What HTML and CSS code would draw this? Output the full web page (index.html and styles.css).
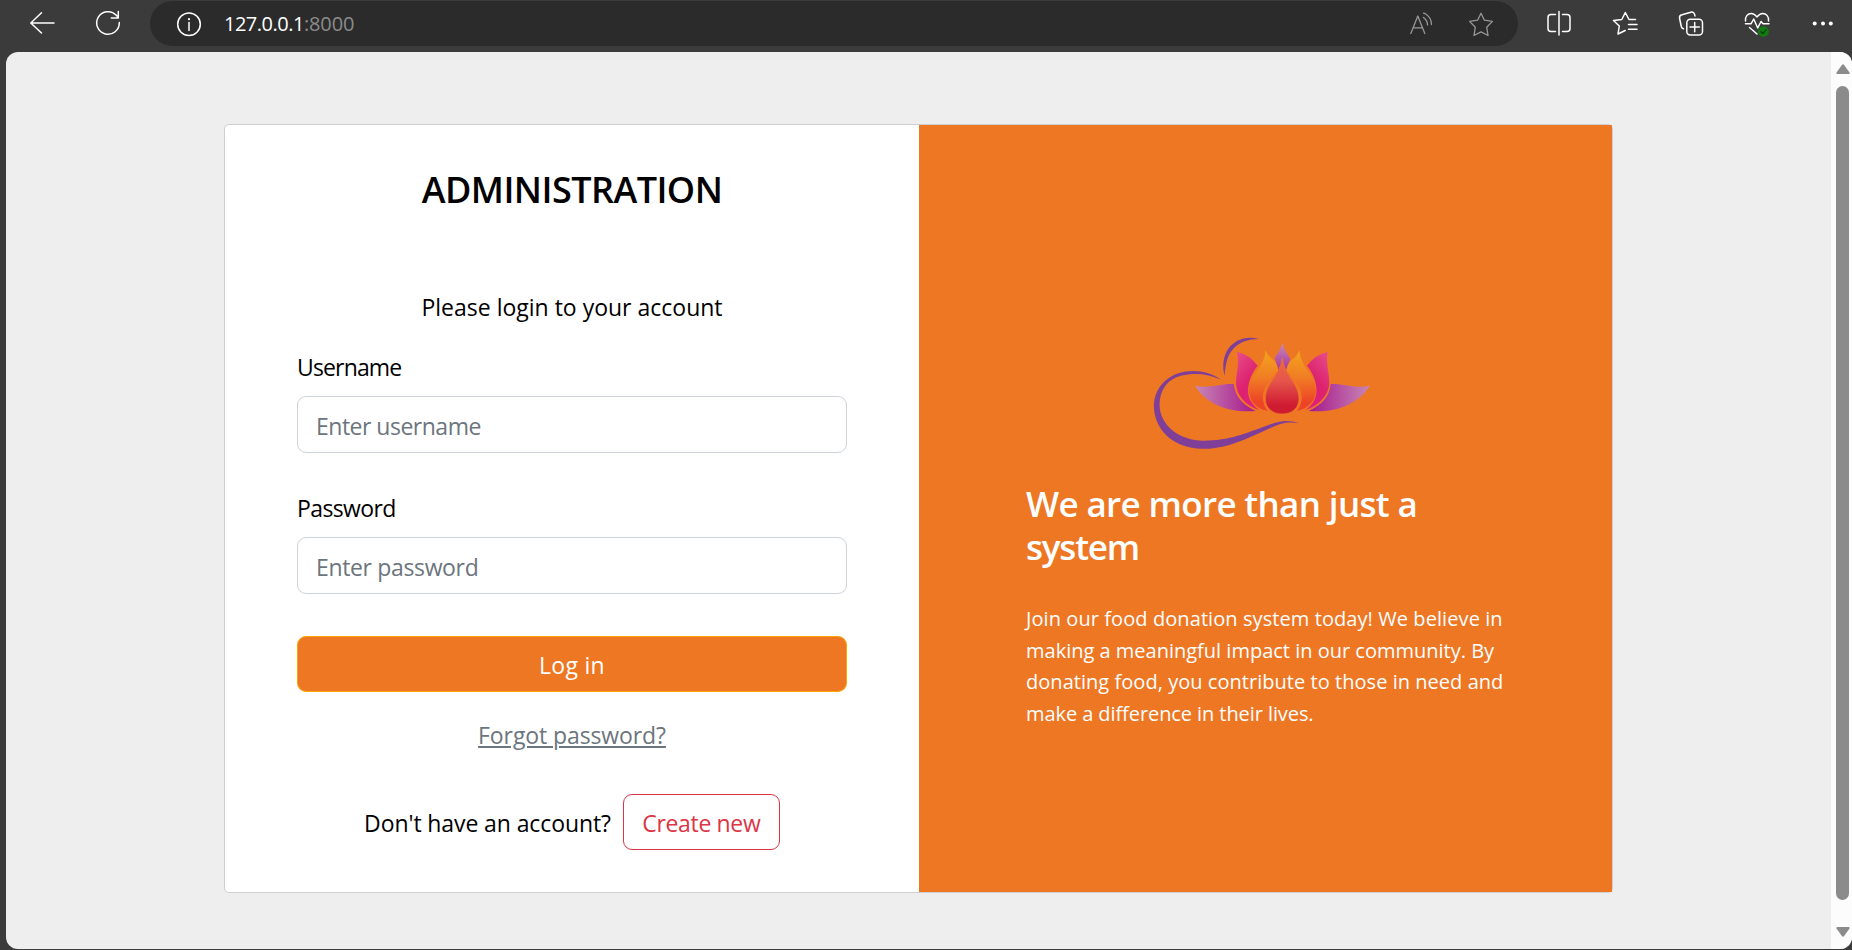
FILE: index.html
```html
<!DOCTYPE html>
<html lang="en">
<head>
<meta charset="utf-8">
<title>Administration</title>
<link rel="stylesheet" href="styles.css">
</head>
<body>
<header class="toolbar">
  <div class="slot"><svg class="icon" viewBox="0 0 28 28"><path d="M26 14H3M13.500 3.800 2.800 14l10.700 10"/></svg></div>
  <div class="slot"><svg class="icon" viewBox="0 0 28 28"><path d="M25.300 13.500A11.300 11.300 0 1 1 22.300 6.300L24.300 8.500M24.300 2.500v6.500h-7"/></svg></div>
  <div class="address">
    <svg class="icon" viewBox="0 0 28 28"><circle cx="14" cy="14.300" r="11.300"/><path d="M14 12.500v8"/><circle class="solid" cx="14" cy="9.200" r="1.100"/></svg>
    <div class="url"><span class="host">127.0.0.1</span><span class="port">:8000</span></div>
    <svg class="icon dim read" viewBox="0 0 28 28"><path d="M2.800 23.500 9.800 6l7 17.500M5.200 17.800h9.200M15.500 7.500q4 3 4 7.500M17 3.500q6.500 4 6.500 11M15.500 3.200q1 .3 2 .7"/></svg>
    <svg class="icon dim star" viewBox="0 0 28 28"><path d="m14 3.300 3.400 6.900 8 1.200-5.700 5.800 1.300 8.300-7-3.600-7 3.600 1.300-8.300-5.700-5.800 8-1.200z"/></svg>
  </div>
  <div class="tools">
    <div class="slot"><svg class="icon" viewBox="0 0 28 28"><path d="M10.500 5.500H6Q3 5.500 3 8.500v11Q3 22.500 6 22.500h4.500M17.500 5.500H22q3 0 3 3v11q0 3-3 3h-4.500M14 2.500v23.500"/></svg></div>
    <div class="slot"><svg class="icon" viewBox="0 0 28 28"><path d="M24.500 10.500H18l-3.700-7-3.500 7-8.300 1 5.800 5.500-1.300 8 7.200-3.500M17.500 15.500H26M17.500 20.300H26"/></svg></div>
    <div class="slot"><svg class="icon" viewBox="0 0 28 28"><rect x="9.800" y="10.200" width="15.700" height="15.700" rx="3.500"/><path d="M17.700 13.500v9.200M13 18.100h9.300M6.500 19.800Q4.800 19.500 4.300 17.500L2.600 9.500Q2 6.500 5 5.800L13.800 3.200Q17.300 2.500 18 7"/></svg></div>
    <div class="slot"><svg class="icon" viewBox="0 0 28 28"><path d="M2.500 12C2 7 5 4.500 8.300 4.500c3 0 4.500 2 5.700 3.500 1.200-1.500 2.700-3.500 5.700-3.500C23 4.500 26 7 25.500 12M2.500 14.800H8l2.700-4.800 4 9 3.300-6.500 2 2.300h6M6.500 18.500l7.500 6.500"/><circle class="badge" cx="20.500" cy="22.500" r="5.300"/><path class="check" d="m17.800 22.700 2 1.800 3.500-3.800"/></svg></div>
    <div class="slot"><svg class="icon" viewBox="0 0 28 28"><circle class="solid" cx="5.700" cy="14.600" r="2"/><circle class="solid" cx="14" cy="14.600" r="2"/><circle class="solid" cx="21.800" cy="14.600" r="2"/></svg></div>
  </div>
</header>
<div class="viewport">
  <main class="page">
    <div class="card">
      <section class="login">
        <h4 class="title"><span>ADMINISTRATION</span></h4>
        <p class="intro">Please login to your account</p>
        <label class="label user">Username</label>
        <div class="field fuser">Enter username</div>
        <label class="label pass">Password</label>
        <div class="field fpass">Enter password</div>
        <button class="submit">Log in</button>
        <a class="forgot">Forgot password?</a>
        <div class="signup"><span class="ask">Don't have an account?</span><button class="create">Create new</button></div>
      </section>
      <section class="promo">
        <svg class="lotus" viewBox="0 0 720 420">
          <defs>
            <linearGradient id="wingL"><stop offset="0" stop-color="#c886b5"/><stop offset="1" stop-color="#a6178b"/></linearGradient>
            <linearGradient id="wingR"><stop offset="0" stop-color="#a6178b"/><stop offset="1" stop-color="#c886b5"/></linearGradient>
            <linearGradient id="pinkL" x1="0" y1="0" x2=".5" y2="1"><stop offset="0" stop-color="#e8508a"/><stop offset=".6" stop-color="#dc226f"/><stop offset="1" stop-color="#e0207a"/></linearGradient>
            <linearGradient id="pinkR" x1="1" y1="0" x2=".5" y2="1"><stop offset="0" stop-color="#e8508a"/><stop offset=".6" stop-color="#dc226f"/><stop offset="1" stop-color="#e0207a"/></linearGradient>
            <linearGradient id="amber" x1="0" y1="0" x2="0" y2="1"><stop offset="0" stop-color="#f3a51d"/><stop offset=".45" stop-color="#f17d24"/><stop offset=".85" stop-color="#ed4428"/></linearGradient>
            <linearGradient id="tip" x1="0" y1="0" x2="0" y2="1"><stop offset="0" stop-color="#c88abb"/><stop offset="1" stop-color="#a8359a"/></linearGradient>
            <linearGradient id="core" x1="0" y1="0" x2="0" y2="1"><stop offset="0" stop-color="#ee6a3c"/><stop offset=".4" stop-color="#e5564c"/><stop offset=".85" stop-color="#cf1b32"/></linearGradient>
          </defs>
          <path class="swirl" d="M357 57C318 46 285 59 266 85 249 108 246 140 254 168 256 133 262 105 280 86 300 65 326 57 357 57Z"/>
          <path class="swirl" d="M243 179C210 154 158 145 115 160 64 177 35 225 43 275 52 337 104 383 185 386 262 389 330 350 393 323 425 310 443 304 477 310 444 298 420 302 386 315 318 339 270 362 190 362 119 361 69 320 60 270 53 218 79 177 123 167 165 158 204 161 243 179Z"/>
          <path fill="url(#wingL)" d="M165 197C205 207 238 190 281 192 286 231 307 253 347 273 271 280 199 254 165 197Z"/>
          <path fill="url(#wingR)" d="M689 197C648 207 615 190 572 192 568 231 547 253 506 273 583 280 655 254 689 197Z"/>
          <path fill="url(#pinkL)" d="M291 95Q327 103 353 137C326 170 315 217 334 245 341 257 350 265 359 271 316 256 288 225 288 188 289 155 299 135 291 95Z"/>
          <path fill="url(#pinkR)" d="M563 96Q527 103 501 137C528 170 539 217 520 245 513 257 504 265 495 271 538 256 567 225 568 188 568 155 557 135 563 96Z"/>
          <path fill="url(#tip)" d="M427 68Q433 91 451 116L439 150H415L404 113Q422 91 427 68Z"/>
          <path fill="url(#amber)" d="M376 90Q384 110 400 120 412 132 415 151C387 182 366 207 369 238 371 254 376 264 383 273 347 266 326 240 327 208 329 166 377 137 376 90Z"/>
          <path fill="url(#amber)" d="M479 90Q470 110 455 120 442 132 439 151C467 182 488 207 485 238 483 254 478 264 471 273 507 266 528 240 528 208 526 166 478 137 479 90Z"/>
          <path fill="url(#core)" stroke="#ee7724" stroke-width="2" d="M427 114C431 163 477 190 477 236 477 264 455 282 427 282 398 282 376 264 376 236 376 190 422 163 427 114Z"/>
        </svg>
        <h4 class="headline">We are more than just a<br><span class="tail">system</span></h4>
        <p class="copy"><span class="c1">Join our food donation system today! We believe in</span><br><span class="c2">making a meaningful impact in our community. By</span><br><span class="c3">donating food, you contribute to those in need and</span><br><span class="c4">make a difference in their lives.</span></p>
      </section>
    </div>
  </main>
  <aside class="scrollbar">
    <svg class="arrow" viewBox="0 0 14 10"><path d="M5.700 1.200Q7 -.6 8.300 1.200L13.500 8.500Q14 10 12.500 10H1.500Q0 10 .5 8.500Z"/></svg>
    <div class="thumb"></div>
    <svg class="arrow" viewBox="0 0 14 10"><path d="M5.700 8.800Q7 10.600 8.300 8.800L13.500 1.500Q14 0 12.500 0H1.500Q0 0 .5 1.500Z"/></svg>
  </aside>
</div>
</body>
</html>
```
FILE: styles.css
```css
* { box-sizing: border-box; }
body {
  margin: 0;
  width: 1852px;
  height: 950px;
  overflow: hidden;
  background: #3b3b3b;
  color: #000;
  font: 23px/36px "Open Sans", "Noto Sans", sans-serif;
}
h4, p { margin: 0; font-weight: 400; }
button { font: inherit; padding: 0; margin: 0; }

.toolbar { display: flex; height: 52px; padding-left: 9px; }
.slot { width: 66px; height: 46px; flex: none; display: flex; align-items: center; justify-content: center; }
.icon { width: 28px; height: 28px; flex: none; fill: none; stroke: #fff; stroke-width: 1.5; stroke-linejoin: round; stroke-linecap: round; }
.icon .solid { fill: #fff; stroke: none; }
.icon .badge { fill: #107c10; stroke: none; }
.icon .check { stroke: #073d07; stroke-width: 1.2; }
.icon.dim { stroke: #979797; stroke-width: 1.3; }
.address {
  display: flex;
  flex: none;
  align-items: center;
  width: 1368px;
  height: 45px;
  margin: 1px 0 0 9px;
  padding: 0 23px 0 25px;
  border-radius: 23px;
  background: #2b2b2b;
}
.url { display: flex; flex: 1; margin-left: 21px; font-size: 20px; color: #fff; }
.host { letter-spacing: -.5px; }
.port { color: #8b8b8b; letter-spacing: -.1px; }
.read { margin-right: 31px; }
.tools { display: flex; flex: none; margin-left: 8px; }

.viewport { display: flex; height: 897px; margin-left: 6px; border-radius: 12px; overflow: hidden; background: #eee; }
.page { flex: 1; padding: 72px 0 0 218px; }
.card {
  display: flex;
  width: 1389px;
  height: 769px;
  border: 1px solid #cfcfcf;
  border-radius: 5px;
  background: #fff;
}
.login { width: 694px; padding: 43px 72px 0; display: flex; flex-direction: column; }
.title { font-size: 36px; line-height: 43px; font-weight: 600; text-align: center; letter-spacing: -.55px; }
.intro { margin-top: 78px; text-align: center; }
.label { margin-top: 24px; }
.user { letter-spacing: -.85px; }
.pass { margin-top: 37px; letter-spacing: -.62px; }
.field {
  height: 57px;
  margin-top: 11px;
  padding: 11px 18px 0;
  border: 1px solid #ced4da;
  border-radius: 9px;
  line-height: 36px;
  color: #6c757d;
}
.fuser { letter-spacing: -.5px; }
.fpass { letter-spacing: -.35px; }
.submit {
  height: 56px;
  margin-top: 42px;
  padding-top: 1px;
  border: 1px solid #ffa500;
  border-radius: 9px;
  background: #ee7724;
  color: #fff;
  letter-spacing: .3px;
}
.forgot { align-self: center; margin-top: 25px; color: #6c757d; text-decoration: underline; letter-spacing: -.1px; }
.signup { display: flex; align-items: center; justify-content: center; gap: 12px; margin-top: 41px; letter-spacing: -.1px; }
.create {
  width: 157px;
  height: 56px;
  padding-top: 1px;
  border: 1px solid #dc3545;
  border-radius: 9px;
  background: #fff;
  color: #dc3545;
  letter-spacing: -.35px;
}
.ask { padding-top: 1px; }
.promo { width: 693px; padding: 195px 0 0 107px; background: #ee7724; color: #fff; }
.lotus { display: block; width: 240px; height: 140px; margin-left: 114px; }
.swirl { fill: #7f3f98; }
.headline { margin-top: 22px; font-size: 35px; line-height: 43.2px; font-weight: 600; letter-spacing: -.65px; white-space: nowrap; }
.tail { letter-spacing: -1.200px; }
.copy { margin-top: 35px; font-size: 20px; line-height: 31.500px; white-space: nowrap; }
.c1 { letter-spacing: .08px; }
.c3 { letter-spacing: .04px; }
.c4 { letter-spacing: -.08px; }

.scrollbar { display: flex; flex-direction: column; align-items: center; width: 21px; padding: 12px 0 12px 2px; background: #fcfcfc; }
.arrow { display: block; width: 14px; height: 10px; fill: #8b8b8b; }
.thumb { width: 13px; height: 814px; margin: 12px 0 27px; border-radius: 7px; background: #8b8b8b; }
```
